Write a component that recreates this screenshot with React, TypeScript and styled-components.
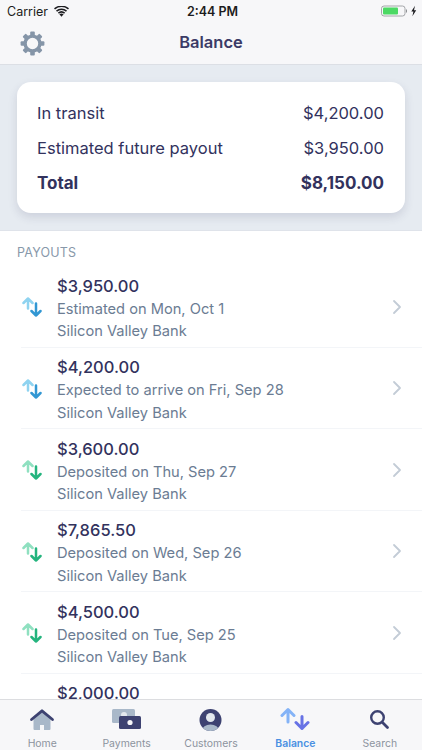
import React from "react";
import styled, { createGlobalStyle } from "styled-components";

const GlobalStyle = createGlobalStyle`
html, body {
  margin: 0;
  padding: 0;
  background: #fff;
}
body {
  font-family: Inter, "Liberation Sans", sans-serif;
  -webkit-font-smoothing: antialiased;
}
`;

const Screen = styled.div`
  width: 422px;
  height: 750px;
  display: flex;
  flex-direction: column;
  overflow: hidden;
  background: #fff;
`;

const Header = styled.div`
  flex: none;
  height: 65px;
  background: #f7f7f9;
  border-bottom: 1px solid #dcdfe5;
  box-sizing: border-box;
  display: flex;
  flex-direction: column;
`;

const StatusBar = styled.div`
  height: 22px;
  display: grid;
  grid-template-columns: 1fr auto 1fr;
  align-items: center;
  padding: 0 5px 0 7px;
  font-size: 12.5px;
  color: #1c1c20;
`;

const StatusLeft = styled.div`
  display: flex;
  align-items: center;
  gap: 6px;
  font-size: 12.5px;
`;

const Clock = styled.div`
  font-weight: 600;
  font-size: 12.5px;
  padding-left: 1px;
`;

const StatusRight = styled.div`
  display: flex;
  justify-content: flex-end;
  align-items: center;
`;

const NavBar = styled.div`
  flex: 1;
  position: relative;
  display: flex;
  align-items: center;
  justify-content: center;
  padding-bottom: 2px;
`;

const NavTitle = styled.div`
  font-size: 16.5px;
  font-weight: 600;
  color: #3b3b66;
`;

const GearButton = styled.div`
  position: absolute;
  left: 20px;
  top: 9px;
  width: 25px;
  height: 25px;
`;

const Hero = styled.div`
  flex: none;
  height: 166px;
  box-sizing: border-box;
  background: #e6ebf1;
  border-bottom: 1px solid #dfe3ea;
  padding: 17px 17px 0;
`;

const Card = styled.div`
  height: 131px;
  box-sizing: border-box;
  background: #fff;
  border-radius: 14px;
  box-shadow: 0 4px 10px rgba(50, 50, 93, 0.14);
  padding: 14px 21px 13px 20px;
  display: flex;
  flex-direction: column;
  justify-content: space-between;
`;

const CardRow = styled.div<{ $strong?: boolean }>`
  height: 34px;
  display: flex;
  justify-content: space-between;
  align-items: center;
  font-size: ${(p) => (p.$strong ? "17px" : "16.5px")};
  color: #32325d;
  font-weight: ${(p) => (p.$strong ? 700 : 400)};
`;

const Payouts = styled.div`
  flex: 1;
  min-height: 0;
  overflow: hidden;
  background: #fff;
`;

const SectionTitle = styled.div`
  height: 35px;
  padding: 14px 0 0 17px;
  box-sizing: border-box;
  font-size: 12.5px;
  line-height: 16px;
  letter-spacing: 0.2px;
  color: #8898aa;
`;

const PayoutRow = styled.div`
  height: 81.5px;
  box-sizing: border-box;
  display: flex;
  align-items: center;
  margin-left: 21px;
  padding-right: 20px;
  border-bottom: 1px solid #f3f5f8;
`;

const PayoutIcon = styled.div`
  flex: none;
  width: 36px;
  display: flex;
  padding: 2px 0 0 1px;
  box-sizing: border-box;
`;

const PayoutText = styled.div`
  flex: 1;
  align-self: flex-start;
  padding-top: 8.5px;
  display: flex;
  flex-direction: column;
`;

const Amount = styled.div`
  font-size: 16.5px;
  line-height: 23px;
  font-weight: 500;
  color: #32325d;
`;

const Detail = styled.div`
  font-size: 14.65px;
  line-height: 22.5px;
  color: #6b7c93;
`;

const Chevron = styled.div`
  flex: none;
  width: 10px;
  height: 16px;
  margin-top: 1px;
`;

const TabBar = styled.div`
  flex: none;
  height: 51px;
  box-sizing: border-box;
  background: #f7f7f9;
  border-top: 1px solid #dcdde0;
  display: grid;
  grid-template-columns: repeat(5, 1fr);
`;

const Tab = styled.div<{ $active?: boolean }>`
  display: flex;
  flex-direction: column;
  align-items: center;
  padding-top: 7px;
  font-size: 10.4px;
  line-height: 12px;
  font-weight: ${(p) => (p.$active ? 600 : 400)};
  color: ${(p) => (p.$active ? "#4a90e2" : "#8c939e")};
`;

const TabIcon = styled.div`
  width: 30px;
  height: 30px;
  margin-bottom: 1px;
`;

const Wifi = () => (
  <svg width="15" height="11" viewBox="0 0 15 11">
    <path d="M7.5 10.8 5.4 8.3a3.2 3.2 0 0 1 4.2 0z" fill="#1c1c20" />
    <path d="M3.9 6.6a5.6 5.6 0 0 1 7.2 0l-1 1.1a4.1 4.1 0 0 0-5.2 0z" fill="#1c1c20" />
    <path d="M2 4.5a8.5 8.5 0 0 1 11 0l-1 1.2a7 7 0 0 0-9 0z" fill="#1c1c20" />
    <path d="M0 2.3a11.4 11.4 0 0 1 15 0l-1 1.2a9.9 9.9 0 0 0-13 0z" fill="#1c1c20" />
  </svg>
);

const Battery = () => (
  <svg width="36" height="12" viewBox="0 0 36 12">
    <rect x="0.5" y="1" width="23.5" height="10" rx="2.5" fill="none" stroke="#8f9296" strokeWidth="0.8" />
    <rect x="2" y="2.5" width="15" height="7" rx="1" fill="#4cd964" />
    <rect x="25" y="4.5" width="1" height="3" fill="#8f9296" />
    <path d="M34 0.8 30.300 6.600h2.100l-1 4.600 3.800-6h-2.200z" fill="#1c1c20" />
  </svg>
);

const Gear = () => {
  const teeth = [0, 45, 90, 135, 180, 225, 270, 315];
  return (
    <svg width="25" height="25" viewBox="0 0 25 25">
      {teeth.map((a) => (
        <rect key={a} x="10.2" y="0.6" width="4.6" height="5" rx="1" fill="#8595a8" transform={`rotate(${a} 12.5 12.5)`} />
      ))}
      <circle cx="12.5" cy="12.5" r="7.4" fill="none" stroke="#8595a8" strokeWidth="3.4" />
    </svg>
  );
};

const ArrowPair = ({ up, down }: { up: string; down: string }) => (
  <svg width="20" height="20" viewBox="0 0 20 20" fill="none" strokeWidth="2.5" strokeLinecap="round" strokeLinejoin="round">
    <path d="M6 11.500V1.500M1.500 6 6 1.500 10.500 6" stroke={up} />
    <path d="M14 6.500V18.500M9.500 14 14 18.500 18.500 14" stroke={down} />
  </svg>
);

const ChevronIcon = () => (
  <svg width="10" height="16" viewBox="0 0 10 16" fill="none">
    <path d="M2 2l6 6-6 6" stroke="#c3ccd6" strokeWidth="1.8" strokeLinecap="round" strokeLinejoin="round" />
  </svg>
);

const HomeIcon = () => (
  <svg width="30" height="30" viewBox="0 0 30 30">
    <path d="M6.500 11.500 15 5l8.500 6.500V22a1 1 0 0 1-1 1h-5.500v-5h-4v5H7.500a1 1 0 0 1-1-1z" fill="#a9b8c9" />
    <path d="M4.500 12.500 15 3.800 25.500 12.500" fill="none" stroke="#3d4271" strokeWidth="2.800" strokeLinecap="round" strokeLinejoin="round" />
  </svg>
);

const PaymentsIcon = () => (
  <svg width="30" height="30" viewBox="0 0 30 30">
    <rect x="0" y="2" width="23" height="14" rx="1.500" fill="#a9b8c9" />
    <circle cx="12" cy="8" r="3" fill="#e3e8ee" />
    <rect x="7" y="9" width="22" height="13" rx="1.500" fill="#3d4271" />
    <circle cx="18" cy="15.500" r="2.600" fill="#f7f7f9" />
  </svg>
);

const CustomersIcon = () => (
  <svg width="30" height="30" viewBox="0 0 30 30">
    <defs>
      <clipPath id="face">
        <circle cx="14.500" cy="13" r="11" />
      </clipPath>
    </defs>
    <circle cx="14.500" cy="13" r="11" fill="#3d4271" />
    <g clipPath="url(#face)">
      <ellipse cx="14.500" cy="23.500" rx="8.500" ry="6" fill="#a9b8c9" />
    </g>
    <circle cx="14.500" cy="10.500" r="4.500" fill="#e3e8ee" />
  </svg>
);

const BalanceIcon = () => (
  <svg width="30" height="30" viewBox="0 0 30 30" fill="none" strokeWidth="3" strokeLinecap="round" strokeLinejoin="round">
    <path d="M8 15V2.500M2 8.500 8 2.500l6 6" stroke="#84b3f7" />
    <path d="M22 9.500V21.500M16 15.500l6 6 6-6" stroke="#6772e5" />
  </svg>
);

const SearchIcon = () => (
  <svg width="30" height="30" viewBox="0 0 30 30" fill="none" strokeLinecap="round">
    <circle cx="12.500" cy="10.500" r="6.300" stroke="#3d4271" strokeWidth="2.400" />
    <path d="M17.500 15.500l5 5" stroke="#3d4271" strokeWidth="2.800" />
  </svg>
);

const blue = { up: "#8fd3f0", down: "#3297d3" };
const green = { up: "#8fe0c0", down: "#24b47e" };

const payouts = [
  { amount: "$3,950.00", detail: "Estimated on Mon, Oct 1", tone: blue },
  { amount: "$4,200.00", detail: "Expected to arrive on Fri, Sep 28", tone: blue },
  { amount: "$3,600.00", detail: "Deposited on Thu, Sep 27", tone: green },
  { amount: "$7,865.50", detail: "Deposited on Wed, Sep 26", tone: green },
  { amount: "$4,500.00", detail: "Deposited on Tue, Sep 25", tone: green },
  { amount: "$2,000.00", tone: green },
];

export default function App() {
  return (
    <Screen>
      <GlobalStyle />
      <Header>
        <StatusBar>
          <StatusLeft>
            Carrier <Wifi />
          </StatusLeft>
          <Clock>2:44 PM</Clock>
          <StatusRight>
            <Battery />
          </StatusRight>
        </StatusBar>
        <NavBar>
          <GearButton>
            <Gear />
          </GearButton>
          <NavTitle>Balance</NavTitle>
        </NavBar>
      </Header>
      <Hero>
        <Card>
          <CardRow>
            <span>In transit</span>
            <span>$4,200.00</span>
          </CardRow>
          <CardRow>
            <span>Estimated future payout</span>
            <span>$3,950.00</span>
          </CardRow>
          <CardRow $strong>
            <span>Total</span>
            <span>$8,150.00</span>
          </CardRow>
        </Card>
      </Hero>
      <Payouts>
        <SectionTitle>PAYOUTS</SectionTitle>
        {payouts.map((p) => (
          <PayoutRow key={p.amount}>
            {p.detail ? (
              <PayoutIcon>
                <ArrowPair up={p.tone.up} down={p.tone.down} />
              </PayoutIcon>
            ) : (
              <PayoutIcon />
            )}
            <PayoutText>
              <Amount>{p.amount}</Amount>
              {p.detail && <Detail>{p.detail}</Detail>}
              {p.detail && <Detail>Silicon Valley Bank</Detail>}
            </PayoutText>
            {p.detail && (
              <Chevron>
                <ChevronIcon />
              </Chevron>
            )}
          </PayoutRow>
        ))}
      </Payouts>
      <TabBar>
        <Tab>
          <TabIcon><HomeIcon /></TabIcon>
          Home
        </Tab>
        <Tab>
          <TabIcon><PaymentsIcon /></TabIcon>
          Payments
        </Tab>
        <Tab>
          <TabIcon><CustomersIcon /></TabIcon>
          Customers
        </Tab>
        <Tab $active>
          <TabIcon><BalanceIcon /></TabIcon>
          Balance
        </Tab>
        <Tab>
          <TabIcon><SearchIcon /></TabIcon>
          Search
        </Tab>
      </TabBar>
    </Screen>
  );
}
